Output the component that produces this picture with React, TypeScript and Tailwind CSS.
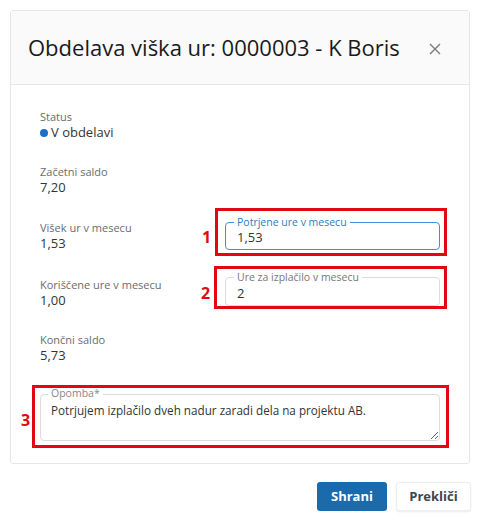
import React from 'react';

const font = { fontFamily: '"Open Sans", "Noto Sans", sans-serif' };

function Info({ label, value, dot }: { label: string; value: string; dot?: boolean }) {
  return (
    <div className="flex flex-col">
      <span className="text-[11px] leading-[15px] text-[#6b6b6b]">{label}</span>
      <span className="flex items-center text-[13px] leading-[17px] text-[#333]">
        {dot && <span className="mr-[3px] inline-block h-[8px] w-[8px] rounded-full bg-[#1b6fc2]" />}
        {value}
      </span>
    </div>
  );
}

export default function App() {
  return (
    <div className="min-h-[527px] w-[483px] bg-white pl-[10px] pt-[10px]" style={font}>
      <div className="w-[460px] rounded-[3px] border border-[#e3e7ec]">
        <div className="flex h-[74px] items-center justify-between border-b border-[#e3e7ec] bg-[#fafafa] pl-[17px] pr-[28px]">
          <h1 className="text-[22px] font-normal text-[#1a1a1a]">Obdelava viška ur: 0000003 - K Boris</h1>
          <svg width="12" height="12" viewBox="0 0 12 12" className="mt-[2px]">
            <path d="M1 1 L11 11 M11 1 L1 11" stroke="#7a7a7a" strokeWidth="1.4" />
          </svg>
        </div>

        <div className="flex flex-col px-[29px] pb-[22px] pt-[24px]">
          <Info label="Status" value="V obdelavi" dot />
          <div className="mt-[23px]">
            <Info label="Začetni saldo" value="7,20" />
          </div>

          <div className="mt-[24px] flex h-[32px]">
            <div className="w-[185px]">
              <Info label="Višek ur v mesecu" value="1,53" />
            </div>
            <div className="relative mt-[2px] flex h-[28px] w-[215px] items-center rounded-[4px] border border-[#3f8fd2] pl-[11px] pt-[3px]">
              <span className="absolute -top-[7px] left-[8px] bg-white px-[3px] text-[10.5px] leading-[12px] text-[#2a7dc1]">Potrjene ure v mesecu</span>
              <span className="text-[13px] leading-[15px] text-[#333]">1,53</span>
              <div className="absolute -bottom-[7px] -left-[11px] -right-[8px] -top-[15px] border-[3px] border-[#e30613]" />
              <span className="absolute -left-[24px] top-[5px] text-[16px] font-bold leading-[18px] text-[#e30613]">1</span>
            </div>
          </div>

          <div className="mt-[25px] flex h-[32px]">
            <div className="w-[185px]">
              <Info label="Koriščene ure v mesecu" value="1,00" />
            </div>
            <div className="relative flex h-[29px] w-[215px] items-center rounded-[4px] border border-[#dcdcdc] pl-[11px] pt-[3px]">
              <span className="absolute -top-[7px] left-[8px] bg-white px-[3px] text-[10.5px] leading-[12px] text-[#777]">Ure za izplačilo v mesecu</span>
              <span className="text-[13px] leading-[15px] text-[#333]">2</span>
              <div className="absolute -bottom-[4px] -left-[12px] -right-[8px] -top-[12px] border-[3px] border-[#e30613]" />
              <span className="absolute -left-[25px] top-[6px] text-[16px] font-bold leading-[18px] text-[#e30613]">2</span>
            </div>
          </div>

          <div className="mt-[23px]">
            <Info label="Končni saldo" value="5,73" />
          </div>

          <div className="relative mt-[30px] h-[47px] w-[400px]">
            <textarea
              readOnly
              defaultValue="Potrjujem izplačilo dveh nadur zaradi dela na projektu AB."
              className="block h-[47px] w-[400px] resize-y rounded-[4px] border border-[#dcdcdc] px-[10px] pt-[7px] text-[11.7px] leading-[16px] text-[#333] outline-none"
              style={font}
            />
            <span className="absolute -top-[7px] left-[8px] bg-white px-[3px] text-[10.5px] leading-[12px] text-[#888]">Opomba*</span>
            <div className="pointer-events-none absolute -bottom-[7px] -left-[8px] -right-[9px] -top-[9px] border-[3px] border-[#e30613]" />
            <span className="absolute -left-[19px] top-[17px] text-[16px] font-bold leading-[18px] text-[#e30613]">3</span>
          </div>
        </div>
      </div>

      <div className="mt-[18px] flex w-[461px] justify-end gap-[9px]">
        <button className="h-[29px] w-[70px] rounded-[3px] bg-[#1b6aac] text-[13px] font-bold text-white">Shrani</button>
        <button className="h-[29px] w-[75px] rounded-[3px] border border-[#eceef1] bg-white text-[13px] font-bold text-[#3c4650] shadow-[0_1px_2px_rgba(0,0,0,0.08)]">Prekliči</button>
      </div>
    </div>
  );
}
